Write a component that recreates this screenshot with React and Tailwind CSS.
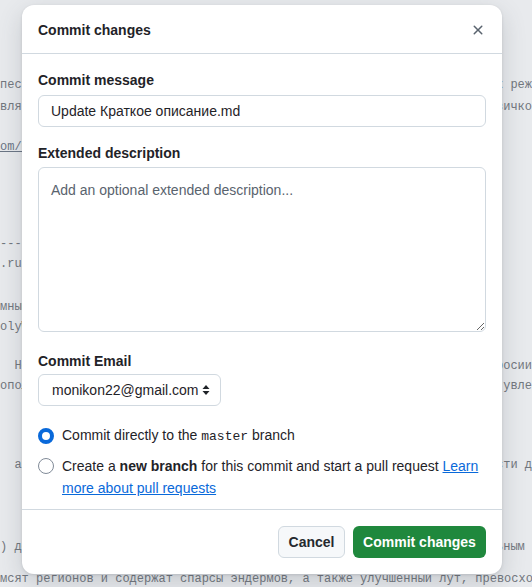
import React from 'react';

const bgRows = [
  { mt: 'mt-[75px]', left: 'пест', right: 'ок реж' },
  { mt: 'mt-[2px]', left: 'вляк', right: 'озичко' },
  { mt: 'mt-[20px]', left: 'om/u', right: '', link: true },
  { mt: 'mt-[77px]', left: '-----', right: '' },
  { mt: 'mt-0', left: '.ru`', right: '' },
  { mt: 'mt-[23px]', left: 'мным', right: '' },
  { mt: 'mt-0', left: 'olyW', right: '' },
  { mt: 'mt-[19px]', left: '  Hol', right: 'росии' },
  { mt: 'mt-0', left: 'опол', right: '  увле' },
  { mt: 'mt-[59px]', left: '  ана', right: 'ости д' },
  { mt: 'mt-[62px]', left: ') до', right: 'ьным' },
];

function XIcon() {
  return (
    <svg width="16" height="16" viewBox="0 0 16 16" fill="#59636e">
      <path d="M3.72 3.72a.75.75 0 0 1 1.06 0L8 6.94l3.22-3.22a.749.749 0 0 1 1.275.326.749.749 0 0 1-.215.734L9.06 8l3.22 3.22a.749.749 0 0 1-.326 1.275.749.749 0 0 1-.734-.215L8 9.06l-3.22 3.22a.751.751 0 0 1-1.042-.018.751.751 0 0 1-.018-1.042L6.94 8 3.72 4.78a.75.75 0 0 1 0-1.06Z" />
    </svg>
  );
}

function UpDown() {
  return (
    <svg width="8" height="12" viewBox="0 0 8 12" fill="#1f2328">
      <path d="M4 1 7.5 5h-7Z" />
      <path d="M4 11 .5 7h7Z" />
    </svg>
  );
}

export default function App() {
  return (
    <div className="relative w-[532px] h-[587px] overflow-hidden bg-[#e8eaed] font-['Liberation_Sans',Arial,sans-serif]">
      {/* page behind the dialog */}
      <div className="flex flex-col font-['Liberation_Mono',monospace] text-[12px] leading-5 text-[#72777e]">
        {bgRows.map((row, idx) => (
          <div key={idx} className={`${row.mt} flex h-5 whitespace-pre`}>
            <span className={`w-[496px] overflow-hidden ${row.link ? 'underline text-[#6a7585]' : ''}`}>{row.left}</span>
            <span>{row.right}</span>
          </div>
        ))}
        <div className="mt-[12px] h-5 whitespace-pre">мсят регионов и содержат спарсы эндермов, а также улучшенный лут, превосходящ</div>
      </div>

      {/* dialog */}
      <div className="absolute left-[22px] top-[5px] w-[480px] h-[569px] bg-white rounded-xl shadow-[0_8px_24px_rgba(66,74,83,0.2),0_1px_3px_rgba(31,35,40,0.12)] flex flex-col text-[#1f2328]">
        <div className="h-[49px] shrink-0 flex items-center justify-between pl-4 pr-2 pt-[2px] border-b border-[#d1d9e0]">
          <h2 className="text-sm font-semibold">Commit changes</h2>
          <button className="w-8 h-8 flex items-center justify-center">
            <XIcon />
          </button>
        </div>

        <div className="flex-1 px-4 pt-4">
          <label className="block text-sm leading-5 font-semibold">Commit message</label>
          <input
            className="mt-[5px] w-full h-8 px-3 text-sm border border-[#d1d9e0] rounded-md text-[#1f2328] outline-none"
            defaultValue="Update Краткое описание.md"
          />

          <label className="block mt-4 text-sm leading-5 font-semibold">Extended description</label>
          <textarea
            className="block mt-1 w-full h-[165px] px-3 py-3 text-sm leading-5 border border-[#d1d9e0] rounded-md outline-none placeholder:text-[#59636e]"
            placeholder="Add an optional extended description..."
          />

          <label className="block mt-[19px] text-sm leading-5 font-semibold">Commit Email</label>
          <div className="mt-[3px] w-[183px] h-8 flex items-center justify-between pl-[13px] pr-[10px] text-sm border border-[#d1d9e0] rounded-md">
            <span className="whitespace-nowrap">monikon22@gmail.com</span>
            <UpDown />
          </div>

          <div className="mt-[18px] flex items-center gap-2 leading-[22px] text-sm">
            <span className="w-4 h-4 shrink-0 rounded-full border-[4px] border-[#0969da] bg-white"></span>
            <span>
              Commit directly to the <span className="font-['Liberation_Mono',monospace] text-[13px]">master</span> branch
            </span>
          </div>

          <div className="mt-[7px] flex items-start gap-2 text-sm leading-[22px]">
            <span className="mt-[3px] w-4 h-4 shrink-0 rounded-full border border-[#818b98] bg-white"></span>
            <span className="w-[420px]">
              Create a <span className="font-semibold">new branch</span> for this commit and start a pull request{' '}
              <a className="text-[#0969da] underline" href="#">Learn more about pull requests</a>
            </span>
          </div>
        </div>

        <div className="h-[65px] shrink-0 border-t border-[#d1d9e0] flex items-center justify-end gap-2 px-4">
          <button className="h-8 w-[67px] rounded-md border border-[#d1d9e0] bg-[#f6f8fa] text-sm font-semibold text-[#25292e]">
            Cancel
          </button>
          <button className="h-8 w-[133px] rounded-md bg-[#1f883d] text-sm font-semibold text-white">
            Commit changes
          </button>
        </div>
      </div>
    </div>
  );
}
